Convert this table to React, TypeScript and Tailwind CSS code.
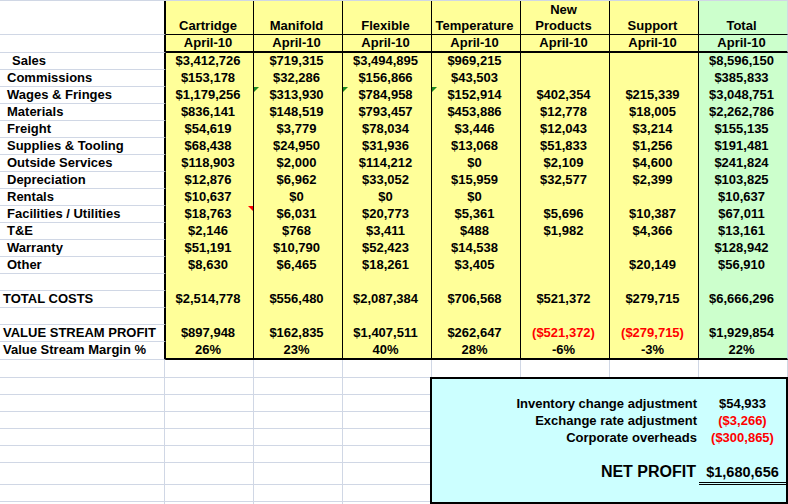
import React from "react";

type Row = {
  label: string;
  pad: string;
  values: string[];
  red?: boolean;
};

const widths = [
  "w-[88px]",
  "w-[89px]",
  "w-[89px]",
  "w-[89px]",
  "w-[89px]",
  "w-[89px]",
  "w-[89px]",
];

const headers: string[][] = [
  ["Cartridge"],
  ["Manifold"],
  ["Flexible"],
  ["Temperature"],
  ["New", "Products"],
  ["Support"],
  ["Total"],
];

const rows: Row[] = [
  { label: "Sales", pad: "pl-[12px]", values: ["$3,412,726", "$719,315", "$3,494,895", "$969,215", "", "", "$8,596,150"] },
  { label: "Commissions", pad: "pl-[7px]", values: ["$153,178", "$32,286", "$156,866", "$43,503", "", "", "$385,833"] },
  { label: "Wages & Fringes", pad: "pl-[7px]", values: ["$1,179,256", "$313,930", "$784,958", "$152,914", "$402,354", "$215,339", "$3,048,751"] },
  { label: "Materials", pad: "pl-[7px]", values: ["$836,141", "$148,519", "$793,457", "$453,886", "$12,778", "$18,005", "$2,262,786"] },
  { label: "Freight", pad: "pl-[7px]", values: ["$54,619", "$3,779", "$78,034", "$3,446", "$12,043", "$3,214", "$155,135"] },
  { label: "Supplies & Tooling", pad: "pl-[7px]", values: ["$68,438", "$24,950", "$31,936", "$13,068", "$51,833", "$1,256", "$191,481"] },
  { label: "Outside Services", pad: "pl-[7px]", values: ["$118,903", "$2,000", "$114,212", "$0", "$2,109", "$4,600", "$241,824"] },
  { label: "Depreciation", pad: "pl-[7px]", values: ["$12,876", "$6,962", "$33,052", "$15,959", "$32,577", "$2,399", "$103,825"] },
  { label: "Rentals", pad: "pl-[7px]", values: ["$10,637", "$0", "$0", "$0", "", "", "$10,637"] },
  { label: "Facilities / Utilities", pad: "pl-[7px]", values: ["$18,763", "$6,031", "$20,773", "$5,361", "$5,696", "$10,387", "$67,011"] },
  { label: "T&E", pad: "pl-[7px]", values: ["$2,146", "$768", "$3,411", "$488", "$1,982", "$4,366", "$13,161"] },
  { label: "Warranty", pad: "pl-[7px]", values: ["$51,191", "$10,790", "$52,423", "$14,538", "", "", "$128,942"] },
  { label: "Other", pad: "pl-[7px]", values: ["$8,630", "$6,465", "$18,261", "$3,405", "", "$20,149", "$56,910"] },
  { label: "", pad: "", values: ["", "", "", "", "", "", ""] },
  { label: "TOTAL COSTS", pad: "pl-[3px]", values: ["$2,514,778", "$556,480", "$2,087,384", "$706,568", "$521,372", "$279,715", "$6,666,296"] },
  { label: "", pad: "", values: ["", "", "", "", "", "", ""] },
  { label: "VALUE STREAM PROFIT", pad: "pl-[3px]", values: ["$897,948", "$162,835", "$1,407,511", "$262,647", "($521,372)", "($279,715)", "$1,929,854"] },
];

const margins = ["26%", "23%", "40%", "28%", "-6%", "-3%", "22%"];

const fill = (i: number) => (i === 6 ? "bg-[#ccffcc]" : "bg-[#ffff99]");
const rightLine = (i: number) =>
  i === 6 ? "border-r border-r-[#d0d7e5]" : "border-r border-r-black";

const GreenMark = () => (
  <span className="absolute left-0 top-0 h-0 w-0 border-t-[5px] border-r-[5px] border-t-[#1f8a1f] border-r-transparent" />
);

const RedMark = () => (
  <span className="absolute right-0 top-0 h-0 w-0 border-t-[5px] border-l-[5px] border-t-[#ff0000] border-l-transparent" />
);

const LabelCell: React.FC<{ pad?: string; children?: React.ReactNode }> = ({ pad = "", children }) => (
  <div className={`w-[166px] h-full shrink-0 border-r-2 border-r-black border-b border-b-[#d0d7e5] leading-[16px] whitespace-nowrap ${pad}`}>
    {children}
  </div>
);

const App: React.FC = () => {
  return (
    <div className="w-[788px] h-[504px] overflow-hidden bg-white text-black text-[13px] font-bold font-['Liberation_Sans',Arial,sans-serif] border-t border-t-[#d0d7e5]">
      {/* Header: column names */}
      <div className="flex h-[34px]">
        <LabelCell />
        {headers.map((lines, i) => (
          <div
            key={i}
            className={`${widths[i]} ${fill(i)} ${rightLine(i)} h-full shrink-0 flex flex-col items-center justify-end pr-[3px] leading-[16px] border-b border-b-black`}
          >
            {lines.map((l) => (
              <span key={l}>{l}</span>
            ))}
          </div>
        ))}
      </div>

      {/* Header: month */}
      <div className="flex h-[18px]">
        <LabelCell />
        {headers.map((_, i) => (
          <div
            key={i}
            className={`${widths[i]} ${fill(i)} ${rightLine(i)} h-full shrink-0 text-center pr-[3px] leading-[16px] border-b-2 border-b-black`}
          >
            April-10
          </div>
        ))}
      </div>

      {/* Body */}
      {rows.map((r, ri) => (
        <div key={ri} className="flex h-[17px]">
          <LabelCell pad={r.pad}>{r.label}</LabelCell>
          {r.values.map((v, i) => (
            <div
              key={i}
              className={`${widths[i]} ${fill(i)} ${rightLine(i)} relative h-full shrink-0 text-center pr-[3px] leading-[16px] whitespace-nowrap ${
                v.startsWith("(") ? "text-[#ff0000]" : ""
              }`}
            >
              {r.label === "Wages & Fringes" && i >= 1 && i <= 3 && <GreenMark />}
              {r.label === "Facilities / Utilities" && i === 0 && <RedMark />}
              {v}
            </div>
          ))}
        </div>
      ))}

      {/* Margin row */}
      <div className="flex h-[18px]">
        <LabelCell pad="pl-[3px]">Value Stream Margin %</LabelCell>
        {margins.map((m, i) => (
          <div
            key={i}
            className={`${widths[i]} ${fill(i)} ${rightLine(i)} h-full shrink-0 text-center pr-[3px] leading-[16px] border-b-2 border-b-black`}
          >
            {m}
          </div>
        ))}
      </div>

      {/* Lower sheet area */}
      <div className="flex">
        {/* Empty grid on the left */}
        <div className="w-[430px] shrink-0 flex flex-col">
          {["h-[18px]", "h-[17px]", "h-[17px]", "h-[17px]", "h-[17px]", "h-[17px]", "h-[22px]", "h-[17px]", "h-[17px]"].map((h, ri) => (
            <div key={ri} className={`flex ${h}`}>
              <div className="w-[165px] h-full border-r border-b border-[#d0d7e5]" />
              <div className="w-[89px] h-full border-r border-b border-[#d0d7e5]" />
              <div className="w-[89px] h-full border-r border-b border-[#d0d7e5]" />
              <div className="w-[87px] h-full border-b border-[#d0d7e5]" />
            </div>
          ))}
        </div>

        {/* Adjustment box */}
        <div className="w-[358px] shrink-0 flex flex-col">
          <div className="flex h-[17px]">
            <div className="w-[2px] h-full border-r border-[#d0d7e5]" />
            <div className="w-[89px] h-full border-r border-[#d0d7e5]" />
            <div className="w-[89px] h-full border-r border-[#d0d7e5]" />
            <div className="w-[89px] h-full border-r border-[#d0d7e5]" />
            <div className="w-[89px] h-full border-r border-[#d0d7e5]" />
          </div>

          <div className="h-[127px] border-2 border-black bg-[#ccffff] flex flex-col pt-[17px]">
            {[
              ["Inventory change adjustment", "$54,933", false],
              ["Exchange rate adjustment", "($3,266)", true],
              ["Corporate overheads", "($300,865)", true],
            ].map(([label, value, red]) => (
              <div key={label as string} className="flex h-[17px] leading-[16px]">
                <div className="w-[267px] text-right pr-[2px]">{label}</div>
                <div className={`w-[87px] text-center ${red ? "text-[#ff0000]" : ""}`}>{value}</div>
              </div>
            ))}
            <div className="h-[15px]" />
            <div className="flex h-[23px] items-start">
              <div className="w-[267px] text-right pr-[3px] text-[16px] leading-[20px]">NET PROFIT</div>
              <div className="w-[87px] h-full text-center text-[14.5px] leading-[20px] border-b-[3px] border-double border-black">
                $1,680,656
              </div>
            </div>
          </div>
        </div>
      </div>
    </div>
  );
};

export default App;
